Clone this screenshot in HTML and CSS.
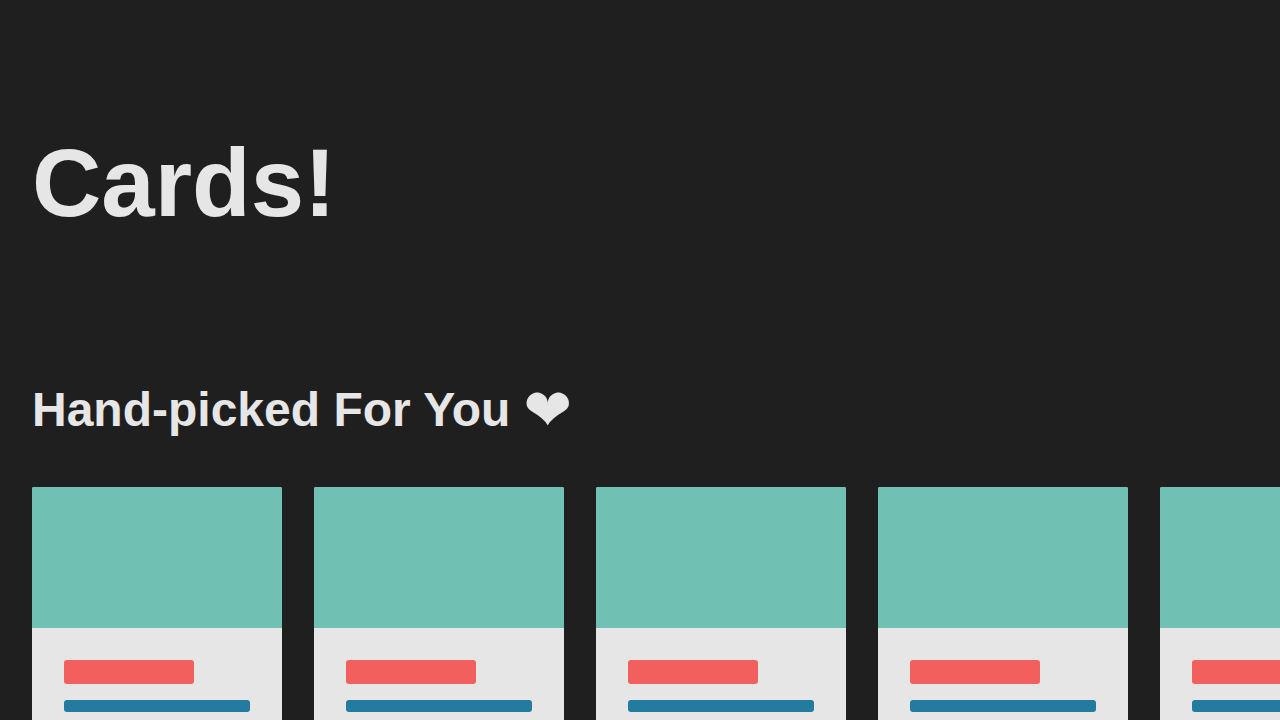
FILE: index.html
```html
<!DOCTYPE html>
<html lang="en">
<head>
<meta charset="utf-8">
<title>Cards!</title>
<link rel="stylesheet" href="styles.css">
</head>
<body>
<header class="hero"><h1 class="hero-title">Cards!</h1></header>
<main>
<section class="shelf">
<h2 class="shelf-title">Hand-picked For You <span class="heart">❤</span></h2>
<ul class="card-row">
<li class="card"><div class="card-image"></div><div class="card-body"><div class="card-heading"></div><div class="card-line"></div></div></li>
<li class="card"><div class="card-image"></div><div class="card-body"><div class="card-heading"></div><div class="card-line"></div></div></li>
<li class="card"><div class="card-image"></div><div class="card-body"><div class="card-heading"></div><div class="card-line"></div></div></li>
<li class="card"><div class="card-image"></div><div class="card-body"><div class="card-heading"></div><div class="card-line"></div></div></li>
<li class="card"><div class="card-image"></div><div class="card-body"><div class="card-heading"></div><div class="card-line"></div></div></li>
</ul>
</section>
</main>
</body>
</html>
```

FILE: styles.css
```css
* {
  box-sizing: border-box;
}

html {
  scrollbar-width: none;
}

body {
  margin: 0;
  background: #1f1f1f;
  color: #e6e6e6;
  font-family: "Liberation Sans", Arial, "DejaVu Sans", sans-serif;
}

.hero {
  padding: 128px 32px;
}

.hero-title {
  margin: 0;
  font-size: 96px;
  line-height: 110px;
}

.shelf-title {
  margin: 0;
  padding: 16px 32px 18px;
  font-size: 48px;
  line-height: 55px;
}

.heart {
  font-family: "DejaVu Sans", sans-serif;
  font-size: 58px;
  line-height: 52px;
  vertical-align: text-bottom;
}

.card-row {
  display: flex;
  gap: 32px;
  margin: 0;
  padding: 32px;
  list-style: none;
  overflow-x: auto;
  scrollbar-width: none;
}

.card {
  flex: 0 0 250px;
  border-radius: 2px;
  background: #e6e6e6;
  overflow: hidden;
}

.card-image {
  height: 141px;
  background: #70c1b3;
}

.card-body {
  display: flex;
  flex-direction: column;
  gap: 16px;
  padding: 32px;
}

.card-heading {
  width: 70%;
  height: 24px;
  border-radius: 3px;
  background: #f25f5c;
}

.card-line {
  height: 12px;
  border-radius: 3px;
  background: #247ba0;
}
```
